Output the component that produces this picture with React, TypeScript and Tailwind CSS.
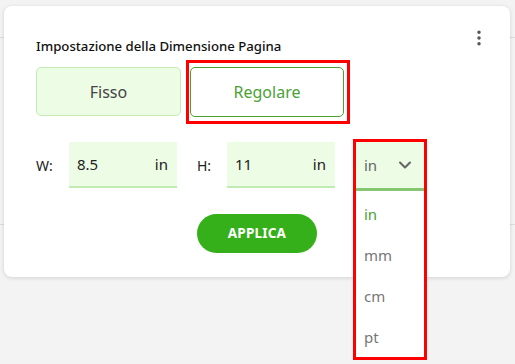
import React from "react";
import { ChevronDown, EllipsisVertical } from "lucide-react";

const units = ["in", "mm", "cm", "pt"];

const SizeInput: React.FC<{ value: string }> = ({ value }) => (
  <div className="w-[108px] h-[46px] bg-[#edfce5] border-b-2 border-[#c2ebb2] flex items-center justify-between pl-2 pr-[9px] text-[15px] text-[#222]">
    <span>{value}</span>
    <span>in</span>
  </div>
);

const App: React.FC = () => {
  return (
    <div
      className="relative w-full h-[364px] bg-[#f3f3f3] overflow-hidden pt-[6px] pl-[4px]"
      style={{ fontFamily: '"Noto Sans", "Open Sans", sans-serif' }}
    >
      <div className="absolute left-0 right-0 top-[37px] h-px bg-[#dcdcdc]" />
      <div className="absolute left-0 right-0 top-[224px] h-px bg-[#dcdcdc]" />

      <div className="relative w-[506px] h-[271px] bg-white rounded-lg shadow-[0_1px_4px_rgba(0,0,0,0.14)] pt-[30px] px-8">
        <button className="absolute right-[21px] top-[22px] text-[#555]">
          <EllipsisVertical size={20} strokeWidth={2.2} />
        </button>

        <h2 className="text-[13.2px] leading-[20px] font-medium text-[#111]">
          Impostazione della Dimensione Pagina
        </h2>

        <div className="flex items-start gap-[5px] mt-[11px]">
          <button className="w-[145px] h-[49px] rounded-[5px] bg-[#edfce5] border border-[#c5ecb6] text-[16px] text-[#444]">
            Fisso
          </button>
          <div className="-mt-[7px] border-[3px] border-[#ff0000] pl-[1px] pr-[3px] pt-[4px] pb-[4px]">
            <button className="block w-[154px] h-[50px] rounded-[5px] bg-white border border-[#4a9f2e] text-[16px] text-[#4aa234]">
              Regolare
            </button>
          </div>
        </div>

        <div className="flex items-start mt-[18px]">
          <span className="w-[33px] h-[46px] flex items-center text-[14px] text-[#222]">W:</span>
          <SizeInput value="8.5" />
          <span className="ml-[20px] w-[30px] h-[46px] flex items-center text-[14px] text-[#222]">H:</span>
          <SizeInput value="11" />

          <div className="relative ml-[21px]">
            <div className="w-[68px] h-[49px] bg-[#edfce5] border-b-[3px] border-[#86c673] flex items-center justify-between pl-2 pr-[9px] text-[15px] text-[#666]">
              <span>in</span>
              <ChevronDown size={20} strokeWidth={2.5} className="text-[#666]" />
            </div>
            <ul className="absolute left-0 top-full w-[68px] h-[166px] bg-white pt-[3px] z-10">
              {units.map((u) => (
                <li
                  key={u}
                  className={`h-[41px] flex items-center pl-2 text-[15px] ${
                    u === "in" ? "text-[#4aa234]" : "text-[#777]"
                  }`}
                >
                  {u}
                </li>
              ))}
            </ul>
            <div className="absolute -left-[3px] -top-[3px] w-[74px] h-[221px] border-[3px] border-[#ff0000] pointer-events-none z-20" />
          </div>
        </div>

        <div className="flex justify-center mt-[23px]">
          <button className="w-[120px] h-[39px] rounded-full bg-[#35b01b] text-white text-[13.5px] font-bold tracking-[0.2px]">
            APPLICA
          </button>
        </div>
      </div>
    </div>
  );
};

export default App;
